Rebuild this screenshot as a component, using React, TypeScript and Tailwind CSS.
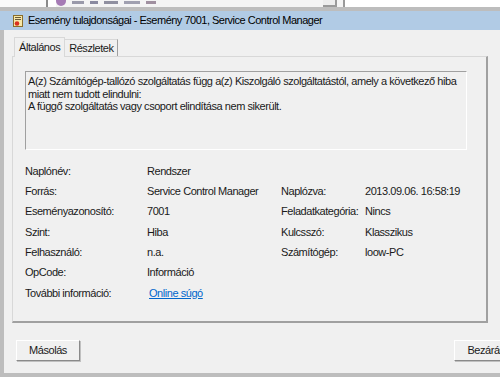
import React from "react";

const font = { fontFamily: '"Liberation Sans", Arial, sans-serif' };

function Row({ label, value, label2, value2, link }: { label: string; value: string; label2?: string; value2?: string; link?: boolean }) {
  return (
    <div className="flex h-[20.3px] items-center">
      <div className="w-[122px]">{label}</div>
      <div className="w-[134px]">
        {link ? <span className="text-[#0066cc] underline ml-[2px]">{value}</span> : value}
      </div>
      {label2 && <div className="w-[84px]">{label2}</div>}
      {value2 && <div>{value2}</div>}
    </div>
  );
}

export default function App() {
  return (
    <div className="w-[500px] h-[377px] bg-white overflow-hidden flex flex-col text-[11px] text-[#1a1a1a] tracking-[-0.45px]" style={font}>
      {/* background window strip */}
      <div className="h-[7px] flex bg-[#f4f4f4]">
        <div className="w-[46px] bg-[#fafafa]" />
        <div className="w-[2px] bg-[#8a8a8a]" />
        <div className="w-[8px] bg-white" />
        <div className="w-[10px] h-[10px] -mt-[4px] rounded-full bg-[#a57ab5]" />
        <div className="flex-1 flex items-start pl-[6px] gap-[6px] pt-[1px]">
          <div className="w-[12px] h-[3px] bg-[#9a9aaa]" />
          <div className="w-[8px] h-[3px] bg-[#8a8aa0]" />
          <div className="w-[14px] h-[3px] bg-[#9090a0]" />
          <div className="w-[16px] h-[3px] bg-[#a0a0b0]" />
          <div className="w-[10px] h-[3px] bg-[#a090a0]" />
        </div>
        <div className="w-[14px] border-b-[2px] border-r-[2px] border-[#9a9a9a] bg-[#ededed]" />
        <div className="w-[6px]" />
        <div className="w-[2px] bg-[#9a9a9a]" />
        <div className="w-[155px] bg-white" />
      </div>
      {/* dialog */}
      <div className="flex-1 flex flex-col bg-[#bdbdbd] pt-[4px] pl-[4px] pb-[4px]">
        <div className="h-[19px] bg-[#b1cbe5] -ml-[4px] pl-[13px] flex items-center gap-[4px] text-[11px] tracking-[-0.5px] text-black">
          <svg width="10" height="12" viewBox="0 0 10 12">
            <rect x="0.5" y="0.5" width="9" height="11" fill="#f7e7a6" stroke="#8a6d2a" />
            <rect x="2" y="2" width="6" height="1" fill="#6a5a3a" />
            <rect x="2" y="4" width="6" height="1" fill="#6a5a3a" />
            <circle cx="4" cy="8.5" r="2.3" fill="#d83020" />
          </svg>
          <span className="ml-[1px]">Esemény tulajdonságai - Esemény 7001, Service Control Manager</span>
        </div>
        <div className="flex-1 bg-[#f0f0f0] flex flex-col pl-[8px] pr-[8px]">
          {/* tabs */}
          <div className="flex h-[26px] items-end pl-[2px]">
            <div className="h-[20px] px-[4px] flex items-center border border-b-0 border-[#d8d8d8] bg-[#f0f0f0] relative top-[1px] z-10">Általános</div>
            <div className="h-[17px] px-[4px] flex items-center border border-b-0 border-l-0 border-[#a0a0a0] border-t-[#d8d8d8] bg-[#f0f0f0]">Részletek</div>
          </div>
          <div className="h-[267px] w-[476px] border border-[#d8d8d8] border-r-[#a0a0a0] border-b-[#a0a0a0] border-b-[2px] border-r-[2px] pl-[12px] pt-[14px]">
            <div className="w-[442px] h-[79px] border border-[#a0a0a0] border-r-white border-b-white px-[2px] pt-[3px] leading-[12.5px]">
              <div>A(z) Számítógép-tallózó szolgáltatás függ a(z) Kiszolgáló szolgáltatástól, amely a következő hiba</div>
              <div>miatt nem tudott elindulni:</div>
              <div>A függő szolgáltatás vagy csoport elindítása nem sikerült.</div>
            </div>
            <div className="mt-[11px] pl-[0px]">
              <Row label="Naplónév:" value="Rendszer" />
              <Row label="Forrás:" value="Service Control Manager" label2="Naplózva:" value2="2013.09.06. 16:58:19" />
              <Row label="Eseményazonosító:" value="7001" label2="Feladatkategória:" value2="Nincs" />
              <Row label="Szint:" value="Hiba" label2="Kulcsszó:" value2="Klasszikus" />
              <Row label="Felhasználó:" value="n.a." label2="Számítógép:" value2="loow-PC" />
              <Row label="OpCode:" value="Információ" />
              <Row label="További információ:" value="Online súgó" link />
            </div>
          </div>
          <div className="flex justify-between mt-[17px]">
            <button className="w-[64px] h-[21px] ml-[4px] border border-[#ffffff] border-r-[#8a8a8a] border-b-[#8a8a8a] bg-[#f0f0f0] shadow-[1px_1px_0_#c0c0c0] flex items-center justify-center text-[11px]">Másolás</button>
            <button className="w-[64px] h-[21px] -mr-[26px] border border-[#ffffff] border-r-[#8a8a8a] border-b-[#8a8a8a] bg-[#f0f0f0] shadow-[1px_1px_0_#c0c0c0] flex items-center justify-center text-[11px]">Bezárás</button>
          </div>
        </div>
      </div>
    </div>
  );
}
